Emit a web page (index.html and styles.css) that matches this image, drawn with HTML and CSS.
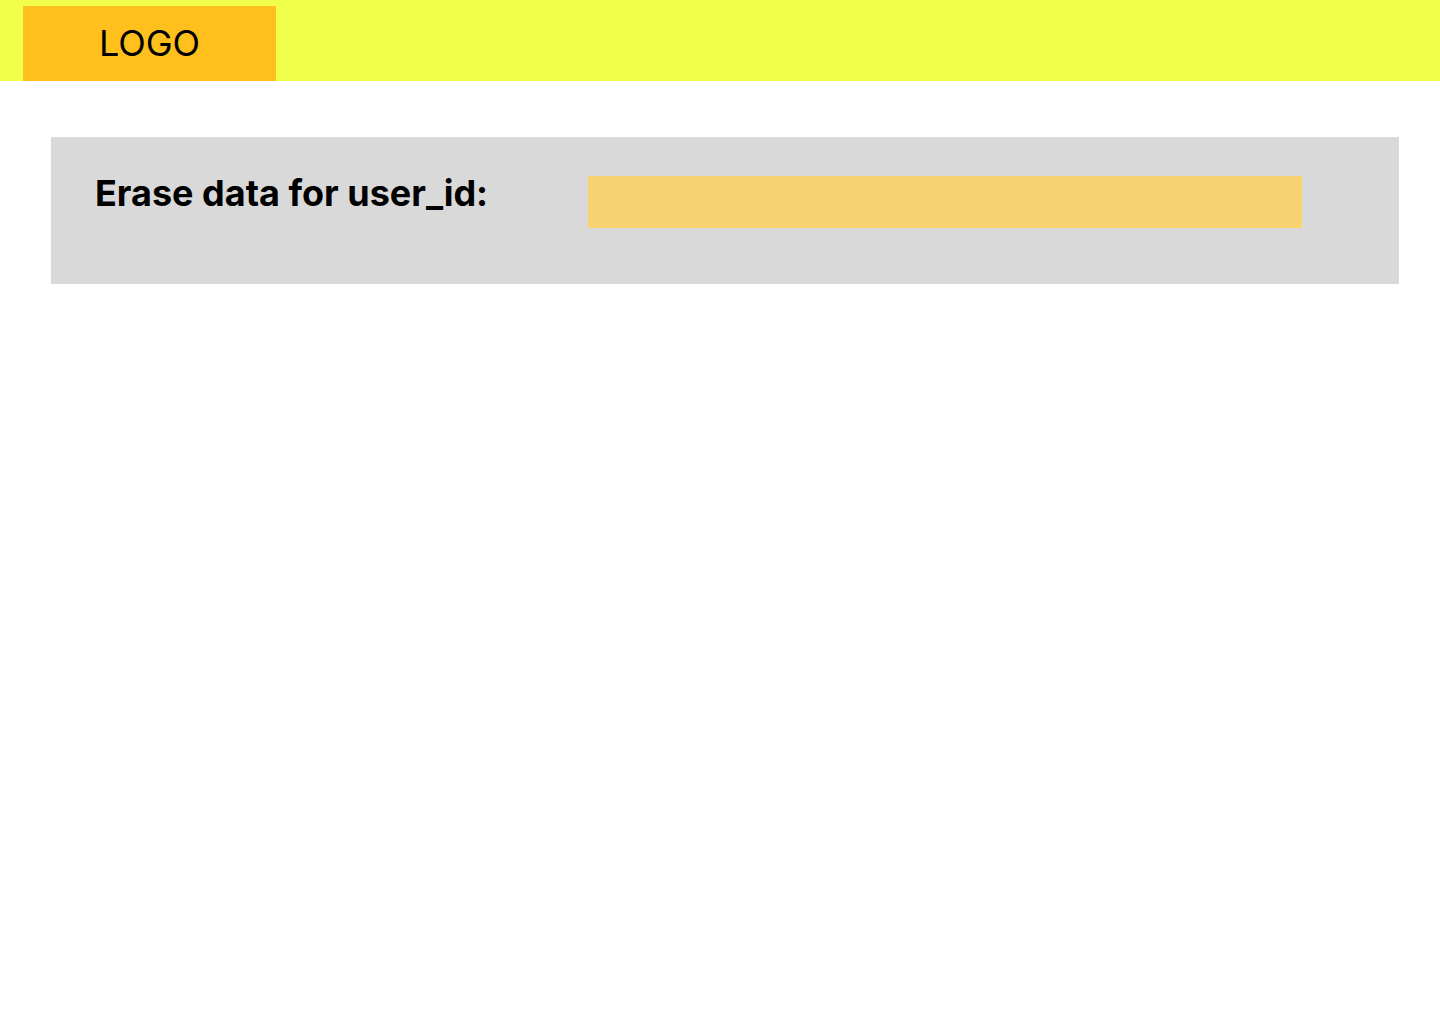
FILE: index.html
```html
<!DOCTYPE html>
<html lang="en">
<head>
<meta charset="utf-8">
<title>Erase data</title>
<link rel="stylesheet" href="styles.css">
</head>
<body>
<header class="topbar">
  <div class="logo">LOGO</div>
</header>
<main class="content">
  <section class="erase-panel">
    <label class="erase-label" for="user-id">Erase data for user_id:</label>
    <input class="erase-input" id="user-id" type="text">
  </section>
</main>
</body>
</html>
```
FILE: styles.css
```css
* { box-sizing: border-box; }
html, body { margin: 0; padding: 0; background: #ffffff; }
body { font-family: Inter, "Noto Sans", sans-serif; color: #000; }
.topbar {
  height: 81px;
  background: #EFFF4A;
  display: flex;
  align-items: flex-end;
  padding-left: 23px;
}
.logo {
  width: 253px;
  height: 75px;
  background: #FFBF1C;
  display: flex;
  align-items: center;
  justify-content: center;
  font-size: 36px;
  font-weight: 400;
  padding-bottom: 1px;
}
.content {
  padding: 56px 41px 0 51px;
}
.erase-panel {
  height: 147px;
  background: #D9D9D9;
  display: flex;
  align-items: flex-start;
  padding-left: 44px;
}
.erase-label {
  margin-top: 34px;
  font-size: 36px;
  font-weight: 700;
  line-height: 44px;
  white-space: nowrap;
}
.erase-input {
  margin-top: 39px;
  margin-left: 100px;
  width: 714px;
  height: 52px;
  background: #F9D371;
  border: none;
  outline: none;
  padding: 0;
}
```
